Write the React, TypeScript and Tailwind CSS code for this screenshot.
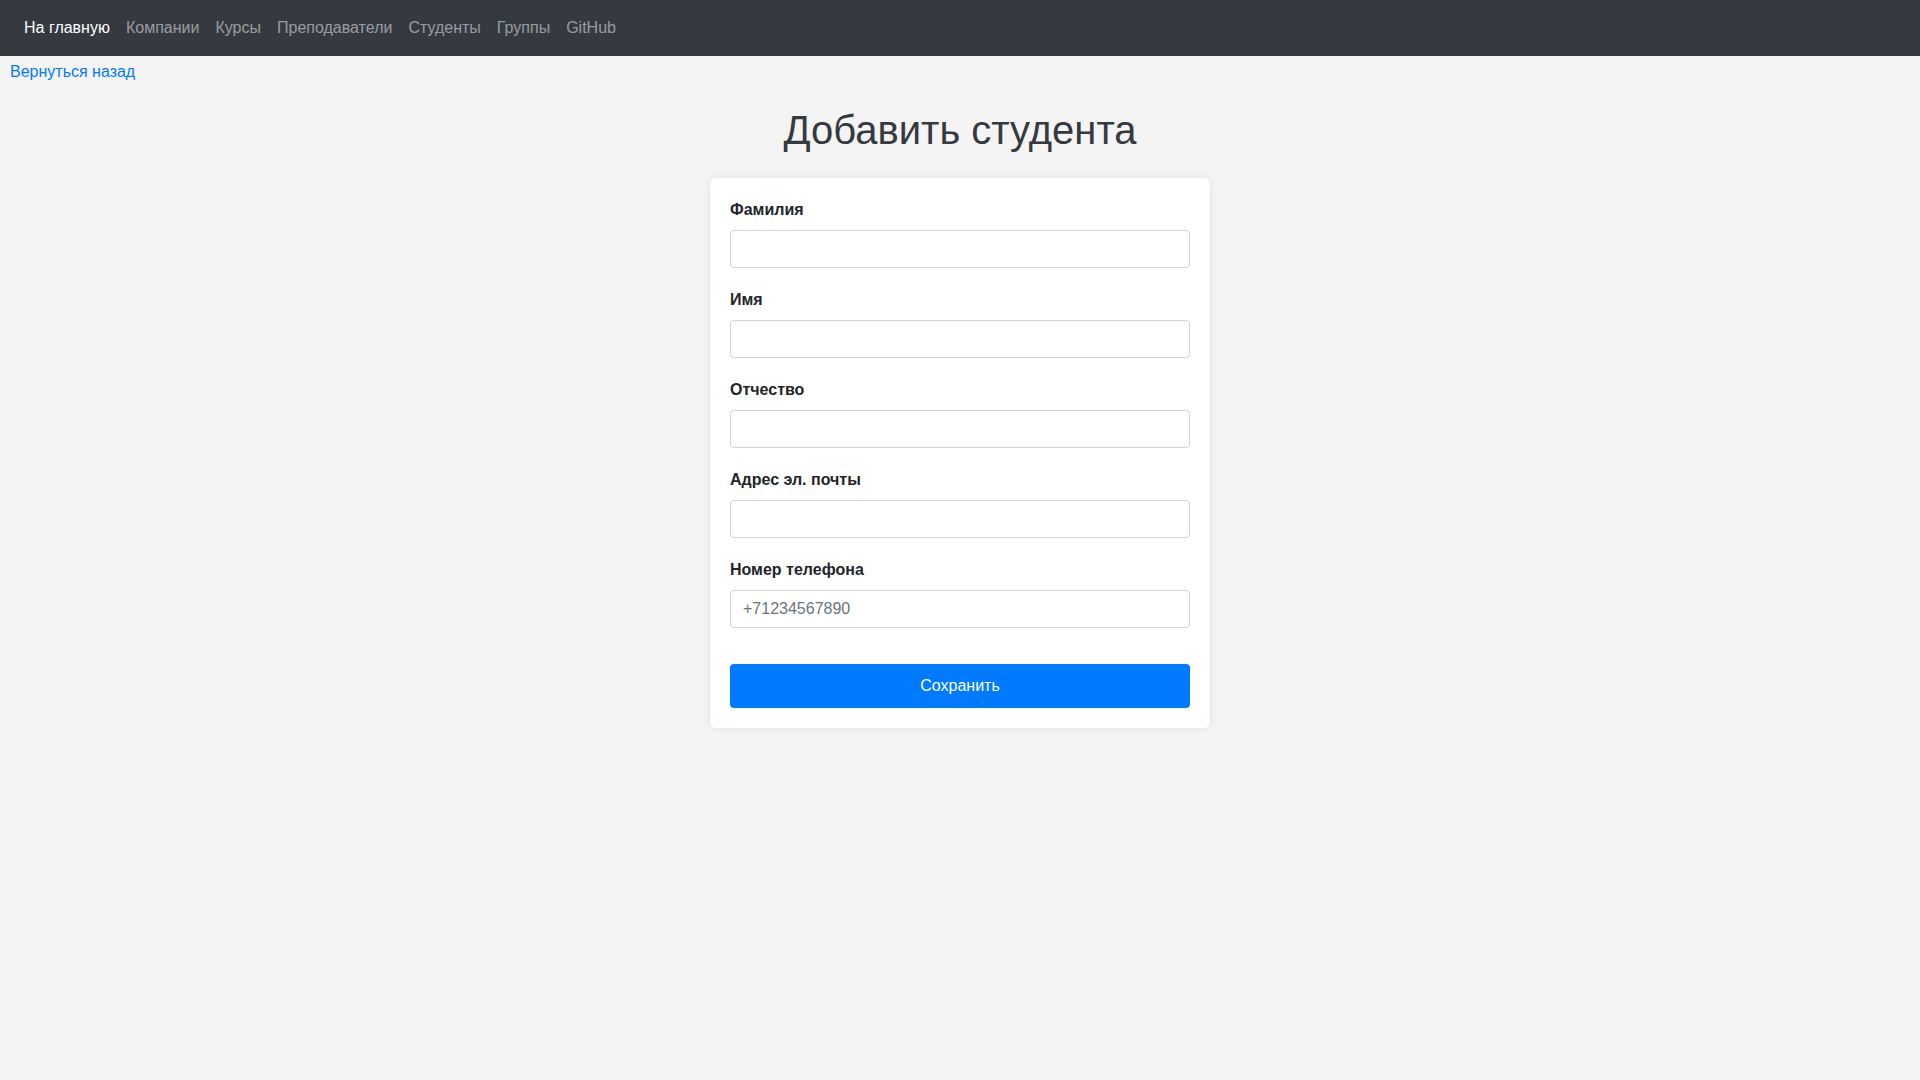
import React from "react";

const navLinks = ["Компании", "Курсы", "Преподаватели", "Студенты", "Группы", "GitHub"];

// Single labelled input of the form
function Field({ label, placeholder }: { label: string; placeholder?: string }) {
  return (
    <div className="mb-5">
      <label className="mb-2 block text-base leading-6 font-bold text-[#212529]">{label}</label>
      <input
        className="block h-[38px] w-full rounded-[4px] border border-[#ced4da] bg-white px-3 text-base text-[#495057] outline-none placeholder:text-[#6c757d]"
        placeholder={placeholder}
        spellCheck={false}
      />
    </div>
  );
}

export default function App() {
  return (
    <div className="min-h-screen bg-[#f4f4f4] font-['Liberation_Sans',Arial,sans-serif] text-[#212529]">
      <nav className="flex h-[56px] items-center bg-[#343a40] px-4">
        <a className="px-2 text-base leading-6 text-white">На главную</a>
        {navLinks.map((link) => (
          <a key={link} className="px-2 text-base leading-6 text-[rgba(255,255,255,0.5)]">
            {link}
          </a>
        ))}
      </nav>

      <div className="px-[10px] pt-1">
        <a className="text-base leading-6 text-[#007bff]">Вернуться назад</a>
      </div>

      <h1 className="mt-[22px] text-center text-[40px] leading-[48px] font-normal text-[#343a40]">
        Добавить студента
      </h1>

      <div className="mx-auto mt-[24px] w-[500px] rounded-[6px] bg-white p-5 shadow-[0_0_10px_rgba(0,0,0,0.08)]">
        <Field label="Фамилия" />
        <Field label="Имя" />
        <Field label="Отчество" />
        <Field label="Адрес эл. почты" />
        <Field label="Номер телефона" placeholder="+71234567890" />
        <button className="mt-4 h-[44px] w-full rounded-[4px] bg-[#007bff] text-base text-white">
          Сохранить
        </button>
      </div>
    </div>
  );
}
